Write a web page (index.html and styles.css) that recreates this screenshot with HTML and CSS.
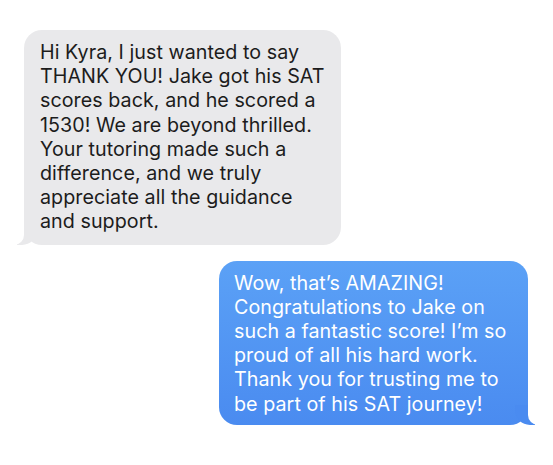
FILE: index.html
```html
<!DOCTYPE html>
<html>
<head>
<meta charset="utf-8">
<link rel="stylesheet" href="styles.css">
</head>
<body>
<div class="thread">
  <div class="bubble them">Hi Kyra, I just wanted to say<br>THANK YOU! Jake got his SAT<br>scores back, and he scored a<br>1530! We are beyond thrilled.<br>Your tutoring made such a<br>difference, and we truly<br>appreciate all the guidance<br>and support.</div>
  <div class="bubble me">Wow, that’s AMAZING!<br>Congratulations to Jake on<br>such a fantastic score! I’m so<br>proud of all his hard work.<br>Thank you for trusting me to<br>be part of his SAT journey!</div>
</div>
</body>
</html>
```
FILE: styles.css
```css
html, body {
  margin: 0;
  padding: 0;
  background: #ffffff;
}
.thread {
  display: flex;
  flex-direction: column;
  gap: 16px;
  padding: 30px 25px 0 24px;
  font-family: "Inter", "Liberation Sans", sans-serif;
  font-size: 19.7px;
  line-height: 24.2px;
  letter-spacing: 0.05px;
}
.bubble {
  position: relative;
  border-radius: 18px;
  padding: 10px 16px 11px 16px;
  white-space: nowrap;
}
.them {
  align-self: flex-start;
  width: 285px;
  background: #e9e9eb;
  color: #1c1c1c;
}
.me {
  align-self: flex-end;
  width: 278px;
  padding: 10px 16px 9px 15px;
  background: linear-gradient(#5ba1f6, #4a8bf0);
  color: #ffffff;
}
.them::before,
.them::after,
.me::before,
.me::after {
  content: "";
  position: absolute;
  bottom: 0;
  height: 20px;
}
.them::before {
  left: -7px;
  width: 20px;
  background: #e9e9eb;
  border-bottom-right-radius: 15px;
}
.them::after {
  left: -10px;
  width: 10px;
  background: #ffffff;
  border-bottom-right-radius: 10px;
}
.me::before {
  right: -7px;
  width: 20px;
  background: #4a8bf0;
  border-bottom-left-radius: 15px;
}
.me::after {
  right: -10px;
  width: 10px;
  background: #ffffff;
  border-bottom-left-radius: 10px;
}
```
